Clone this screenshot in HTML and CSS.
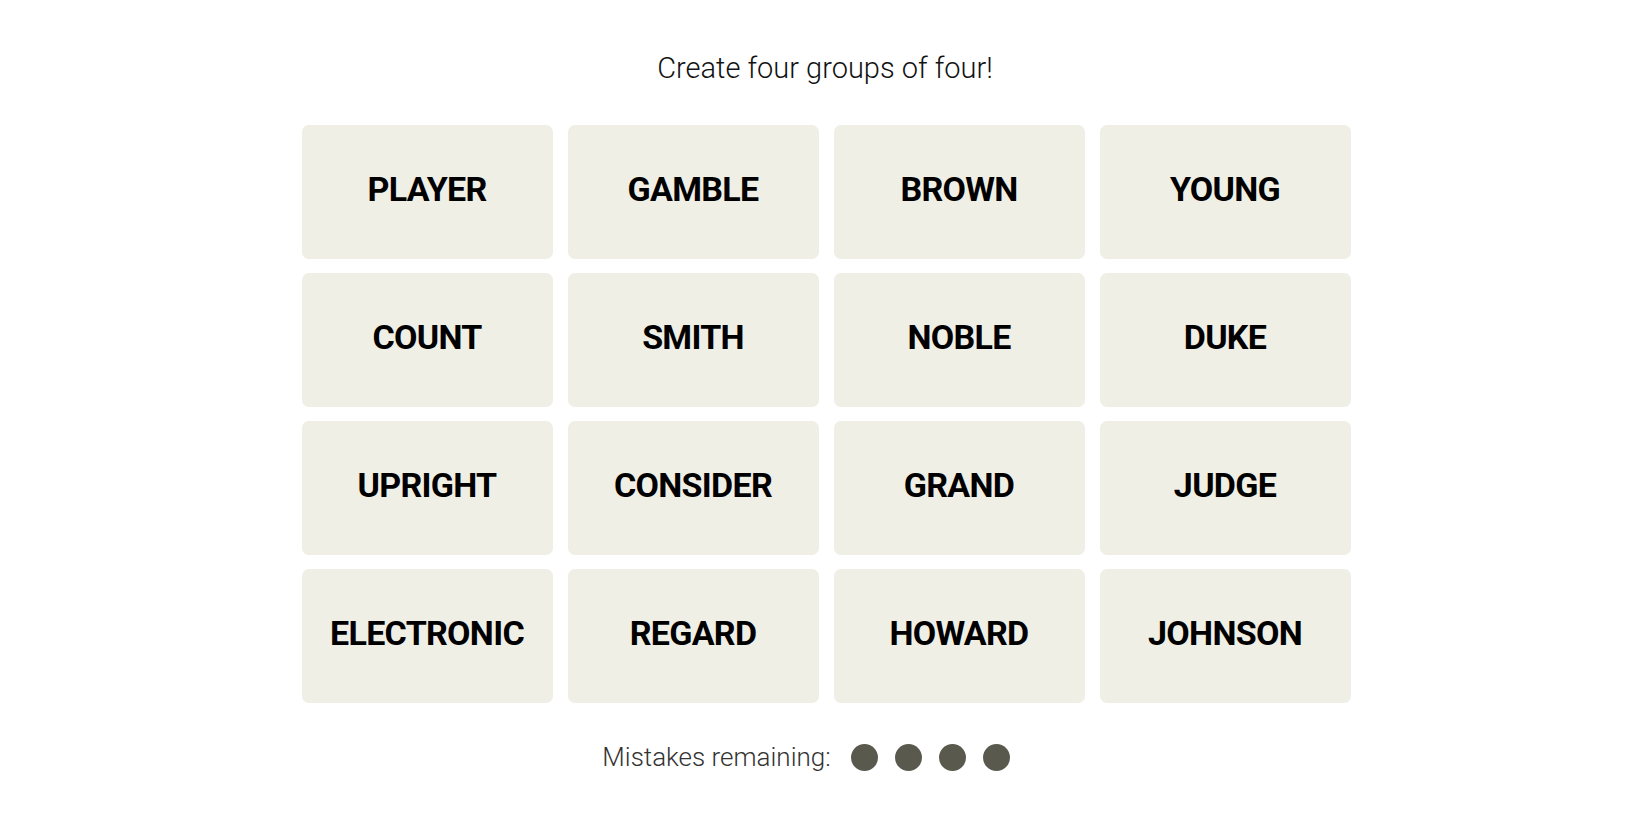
FILE: index.html
```html
<!DOCTYPE html>
<html lang="en">
<head>
<meta charset="utf-8">
<title>Connections</title>
<link rel="stylesheet" href="styles.css">
</head>
<body>
<main class="game">
  <p class="prompt">Create four groups of four!</p>
  <div class="board">
    <button class="tile">PLAYER</button>
    <button class="tile">GAMBLE</button>
    <button class="tile">BROWN</button>
    <button class="tile">YOUNG</button>
    <button class="tile">COUNT</button>
    <button class="tile">SMITH</button>
    <button class="tile">NOBLE</button>
    <button class="tile">DUKE</button>
    <button class="tile">UPRIGHT</button>
    <button class="tile">CONSIDER</button>
    <button class="tile">GRAND</button>
    <button class="tile">JUDGE</button>
    <button class="tile">ELECTRONIC</button>
    <button class="tile">REGARD</button>
    <button class="tile">HOWARD</button>
    <button class="tile">JOHNSON</button>
  </div>
  <div class="mistakes">
    <span class="mistakes-label">Mistakes remaining:</span>
    <span class="dots">
      <span class="dot"></span>
      <span class="dot"></span>
      <span class="dot"></span>
      <span class="dot"></span>
    </span>
  </div>
</main>
</body>
</html>
```

FILE: styles.css
```css
html, body {
  margin: 0;
  padding: 0;
  background: #ffffff;
}

body {
  font-family: Roboto, "Liberation Sans", sans-serif;
  color: #121212;
}

.game {
  display: flex;
  flex-direction: column;
  align-items: center;
  padding-top: 53px;
}

.prompt {
  margin: 0;
  font-size: 29px;
  line-height: 30px;
  font-weight: 300;
  color: #121212;
}

.board {
  margin-top: 42px;
  display: grid;
  grid-template-columns: repeat(4, 251px);
  grid-auto-rows: 134px;
  column-gap: 15px;
  row-gap: 14px;
  transform: translateX(1px);
}

.tile {
  border: none;
  border-radius: 7px;
  background: #efefe6;
  font-family: Roboto, "Liberation Sans", sans-serif;
  font-weight: 700;
  font-size: 34px;
  letter-spacing: -0.7px;
  color: #000000;
  padding: 0 0 6px 0;
  display: flex;
  align-items: center;
  justify-content: center;
}

.mistakes {
  margin-top: 39px;
  display: flex;
  align-items: center;
  gap: 20px;
  height: 30px;
  padding-right: 38px;
}

.mistakes-label {
  font-size: 26px;
  font-weight: 300;
  color: #333333;
  line-height: 30px;
}

.dots {
  display: flex;
  gap: 17px;
}

.dot {
  width: 27px;
  height: 27px;
  border-radius: 50%;
  background: #5a594e;
}
```
